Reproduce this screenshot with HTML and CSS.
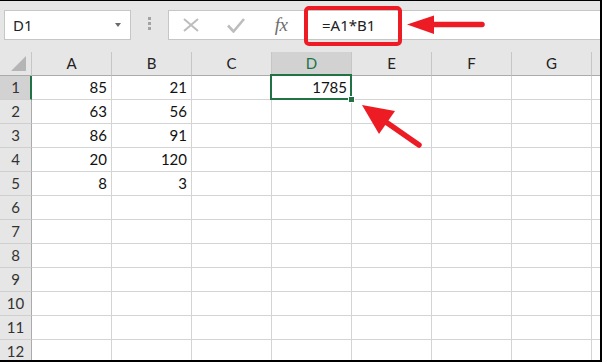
FILE: index.html
```html
<!DOCTYPE html>
<html lang="en">
<head>
    <meta charset="UTF-8">
    <title>Formula bar</title>
    <link rel="stylesheet" href="styles.css">
</head>
<body>
    <div class="window">
        <div class="toolbar">
            <div class="name-box">
                <span class="name-text">D1</span>
                <span class="caret"></span>
            </div>
            <div class="grip">
                <span class="dot"></span>
                <span class="dot"></span>
                <span class="dot"></span>
            </div>
            <div class="formula-box">
                <div class="fbtn fbtn-x">
                    <svg width="16" height="14" viewBox="0 0 16 14"><path d="M1 1 L15 13 M15 1 L1 13" stroke="#bdbdbd" stroke-width="2" fill="none"/></svg>
                </div>
                <div class="fbtn fbtn-ok">
                    <svg width="18" height="15" viewBox="0 0 18 15"><path d="M1 7.5 L6.5 13.5 L17 1" stroke="#bdbdbd" stroke-width="2.6" fill="none"/></svg>
                </div>
                <div class="fbtn fbtn-fx"><span class="fx">fx</span></div>
                <div class="formula-text">=A1*B1</div>
            </div>
        </div>

        <div class="sheet">
            <div class="row head-row">
                <div class="rh corner">
                    <svg width="16" height="16" viewBox="0 0 16 16"><polygon points="15,1 15,16 0,16" fill="#b5b5b5"/></svg>
                </div>
                <div class="ch">A</div>
                <div class="ch">B</div>
                <div class="ch">C</div>
                <div class="ch ch-active">D</div>
                <div class="ch">E</div>
                <div class="ch">F</div>
                <div class="ch">G</div>
                <div class="ch ch-rest"></div>
            </div>
            <div class="row">
                <div class="rh rh-active">1</div>
                <div class="cell">85</div>
                <div class="cell">21</div>
                <div class="cell"></div>
                <div class="cell cell-selected">1785<span class="handle"></span></div>
                <div class="cell"></div>
                <div class="cell"></div>
                <div class="cell"></div>
                <div class="cell cell-rest"></div>
            </div>
            <div class="row">
                <div class="rh">2</div>
                <div class="cell">63</div>
                <div class="cell">56</div>
                <div class="cell"></div><div class="cell"></div><div class="cell"></div><div class="cell"></div><div class="cell"></div>
                <div class="cell cell-rest"></div>
            </div>
            <div class="row">
                <div class="rh">3</div>
                <div class="cell">86</div>
                <div class="cell">91</div>
                <div class="cell"></div><div class="cell"></div><div class="cell"></div><div class="cell"></div><div class="cell"></div>
                <div class="cell cell-rest"></div>
            </div>
            <div class="row">
                <div class="rh">4</div>
                <div class="cell">20</div>
                <div class="cell">120</div>
                <div class="cell"></div><div class="cell"></div><div class="cell"></div><div class="cell"></div><div class="cell"></div>
                <div class="cell cell-rest"></div>
            </div>
            <div class="row">
                <div class="rh">5</div>
                <div class="cell">8</div>
                <div class="cell">3</div>
                <div class="cell"></div><div class="cell"></div><div class="cell"></div><div class="cell"></div><div class="cell"></div>
                <div class="cell cell-rest"></div>
            </div>
            <div class="row">
                <div class="rh">6</div>
                <div class="cell"></div><div class="cell"></div><div class="cell"></div><div class="cell"></div><div class="cell"></div><div class="cell"></div><div class="cell"></div>
                <div class="cell cell-rest"></div>
            </div>
            <div class="row">
                <div class="rh">7</div>
                <div class="cell"></div><div class="cell"></div><div class="cell"></div><div class="cell"></div><div class="cell"></div><div class="cell"></div><div class="cell"></div>
                <div class="cell cell-rest"></div>
            </div>
            <div class="row">
                <div class="rh">8</div>
                <div class="cell"></div><div class="cell"></div><div class="cell"></div><div class="cell"></div><div class="cell"></div><div class="cell"></div><div class="cell"></div>
                <div class="cell cell-rest"></div>
            </div>
            <div class="row">
                <div class="rh">9</div>
                <div class="cell"></div><div class="cell"></div><div class="cell"></div><div class="cell"></div><div class="cell"></div><div class="cell"></div><div class="cell"></div>
                <div class="cell cell-rest"></div>
            </div>
            <div class="row">
                <div class="rh">10</div>
                <div class="cell"></div><div class="cell"></div><div class="cell"></div><div class="cell"></div><div class="cell"></div><div class="cell"></div><div class="cell"></div>
                <div class="cell cell-rest"></div>
            </div>
            <div class="row">
                <div class="rh">11</div>
                <div class="cell"></div><div class="cell"></div><div class="cell"></div><div class="cell"></div><div class="cell"></div><div class="cell"></div><div class="cell"></div>
                <div class="cell cell-rest"></div>
            </div>
            <div class="row">
                <div class="rh">12</div>
                <div class="cell"></div><div class="cell"></div><div class="cell"></div><div class="cell"></div><div class="cell"></div><div class="cell"></div><div class="cell"></div>
                <div class="cell cell-rest"></div>
            </div>
        </div>

        <!-- red annotations drawn over the screenshot -->
        <svg class="marks" width="602" height="362" viewBox="0 0 602 362">
            <rect x="306" y="8" width="94" height="36" rx="3" fill="none" stroke="#ed1c24" stroke-width="4"/>
            <line x1="430" y1="24.5" x2="482" y2="24.5" stroke="#ed1c24" stroke-width="5.5" stroke-linecap="round"/>
            <polygon points="407,24.5 434,15.5 434,34" fill="#ed1c24"/>
            <line x1="383" y1="120" x2="419" y2="145" stroke="#ed1c24" stroke-width="5.5" stroke-linecap="round"/>
            <polygon points="362,105 395,111 379,134" fill="#ed1c24"/>
        </svg>
    </div>
</body>
</html>
```

FILE: styles.css
```css
body {
    margin: 0;
    padding: 0;
    background: #ffffff;
}

.window {
    position: relative;
    width: 602px;
    height: 362px;
    box-sizing: border-box;
    border-top: 1px solid #000;
    border-right: 2px solid #000;
    border-bottom: 2px solid #000;
    overflow: hidden;
    background: #ffffff;
}

/* formula bar */
.toolbar {
    display: flex;
    align-items: flex-start;
    height: 51px;
    box-sizing: border-box;
    padding: 9px 0 0 4px;
    background: #e6e6e6;
}

.name-box {
    display: flex;
    align-items: center;
    width: 127px;
    height: 30px;
    box-sizing: border-box;
    border: 1px solid #c6c6c6;
    background: #fff;
    padding-left: 8px;
}

.name-text {
    font-family: "Noto Sans", sans-serif;
    font-size: 15px;
    color: #222;
}

.caret {
    margin-left: auto;
    margin-right: 9px;
    width: 0;
    height: 0;
    border-left: 3.5px solid transparent;
    border-right: 3.5px solid transparent;
    border-top: 4px solid #6a6a6a;
}

.grip {
    display: flex;
    flex-direction: column;
    gap: 2px;
    margin: 7px 0 0 17px;
}

.dot {
    width: 3px;
    height: 3px;
    background: #a3a3a3;
}

.formula-box {
    flex: 1;
    display: flex;
    align-items: center;
    height: 30px;
    box-sizing: border-box;
    margin-left: 17px;
    border: 1px solid #c6c6c6;
    border-right: none;
    background: #fff;
}

.fbtn {
    display: flex;
    justify-content: center;
    align-items: center;
    height: 100%;
}

.fbtn-x {
    width: 44px;
}

.fbtn-ok {
    width: 46px;
}

.fbtn-fx {
    width: 44px;
}

.fx {
    font-family: "Liberation Serif", serif;
    font-style: italic;
    font-size: 19px;
    color: #6e6e6e;
    letter-spacing: -0.5px;
}

.formula-text {
    padding-left: 19px;
    font-family: "Noto Sans", sans-serif;
    font-size: 15px;
    color: #222;
}

/* grid */
.sheet {
    font-family: Lato, sans-serif;
    font-size: 15px;
    color: #111;
}

.row {
    display: flex;
    height: 24px;
}

.rh,
.ch,
.cell {
    box-sizing: border-box;
    height: 24px;
    line-height: 23px;
    border-bottom: 1px solid #d4d4d4;
}

.rh {
    width: 32px;
    flex: none;
    text-align: center;
    background: #e6e6e6;
    color: #333;
    border-right: 1px solid #ababab;
    border-bottom-color: #cfcfcf;
}

.rh-active {
    background: #d2d2d2;
    border-right: 2px solid #217346;
    padding-left: 1px;
}

.corner {
    display: flex;
    align-items: flex-start;
    justify-content: flex-end;
    padding: 3px 4px 0 0;
    border-right-color: #c6c6c6;
    border-bottom-color: #ababab;
}

.ch {
    width: 80px;
    flex: none;
    text-align: center;
    background: #e6e6e6;
    color: #222;
    border-right: 1px solid #c6c6c6;
    border-bottom-color: #ababab;
}

.ch-active {
    background: #d2d2d2;
    color: #217346;
}

.ch-rest,
.cell-rest {
    flex: 1;
    width: auto;
    border-right: none;
}

.cell {
    width: 80px;
    flex: none;
    text-align: right;
    padding-right: 4px;
    border-right: 1px solid #d4d4d4;
}

.cell-selected {
    position: relative;
}

.cell-selected::after {
    content: "";
    position: absolute;
    top: -2px;
    left: -2px;
    right: -1px;
    bottom: -1px;
    border: 2px solid #217346;
}

.handle {
    position: absolute;
    right: -4px;
    bottom: -4px;
    width: 5px;
    height: 5px;
    background: #217346;
    border: 1px solid #fff;
    z-index: 2;
}

.marks {
    position: absolute;
    top: -1px;
    left: 0;
    pointer-events: none;
}
```
